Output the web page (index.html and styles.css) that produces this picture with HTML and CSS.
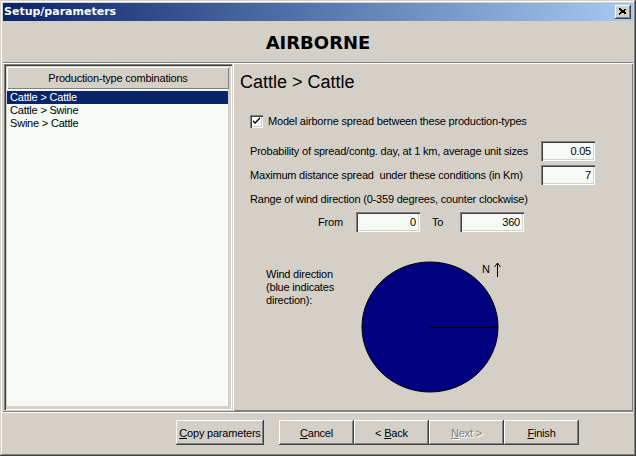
FILE: index.html
```html
<!DOCTYPE html>
<html>
<head>
<meta charset="utf-8">
<link rel="stylesheet" href="styles.css">
</head>
<body>
<div class="window">
  <div class="titlebar">
    <span class="title">Setup/parameters</span>
    <span class="close"><svg width="8" height="7" viewBox="0 0 8 7"><path d="M0.5 0.5 L7.5 6.5 M1.5 0.5 L7.5 5.5 M0.5 1.5 L6.5 6.5 M7.5 0.5 L0.5 6.5 M6.5 0.5 L0.5 5.5" stroke="#000" stroke-width="1" fill="none" shape-rendering="crispEdges"/></svg></span>
  </div>
  <div class="header">AIRBORNE</div>
  <div class="main">
    <div class="left">
      <div class="group">
        <div class="ghead">Production-type combinations</div>
        <ul class="list">
          <li class="sel">Cattle &gt; Cattle</li>
          <li>Cattle &gt; Swine</li>
          <li>Swine &gt; Cattle</li>
        </ul>
      </div>
    </div>
    <div class="right">
      <div class="ptitle">Cattle &gt; Cattle</div>
      <div class="chkrow">
        <span class="chk"><svg width="9" height="9" viewBox="0 0 9 9"><path d="M1 3 L1 5 L3 7 L8 2 L8 0 L3 5 Z" fill="#000"/></svg></span>
        <span>Model airborne spread between these production-types</span>
      </div>
      <div class="row r1">
        <span>Probability of spread/contg. day, at 1 km, average unit sizes</span>
        <span class="field fsmall">0.05</span>
      </div>
      <div class="row r2">
        <span>Maximum distance spread&nbsp; under these conditions (in Km)</span>
        <span class="field fsmall">7</span>
      </div>
      <div class="rangelbl">Range of wind direction (0-359 degrees, counter clockwise)</div>
      <div class="fromrow">
        <span class="from">From</span>
        <span class="field fwide">0</span>
        <span class="to">To</span>
        <span class="field fwide">360</span>
      </div>
      <div class="wind">
        <div class="windlbl">Wind direction<br>(blue indicates<br>direction):</div>
        <div class="dial">
          <svg width="138" height="132" viewBox="0 0 138 132">
            <ellipse cx="69" cy="66" rx="68" ry="65" fill="#000080" stroke="#000" stroke-width="1"/>
            <line x1="69" y1="66.5" x2="137" y2="66.5" stroke="#000" stroke-width="1"/>
            <line x1="131" y1="66" x2="137" y2="66" stroke="#000" stroke-width="1.5"/>
          </svg>
          <div class="north"><span>N</span><svg width="7" height="15" viewBox="0 0 7 15"><path d="M3.5 1 L3.5 15 M3.5 1 L0.5 5 M3.5 1 L6.5 5" stroke="#000" stroke-width="1" fill="none"/></svg></div>
        </div>
      </div>
    </div>
  </div>
  <div class="footer">
    <button class="btn copy"><u>C</u>opy parameters</button>
    <button class="btn cancel"><u>C</u>ancel</button>
    <button class="btn">&lt; <u>B</u>ack</button>
    <button class="btn disabled"><u>N</u>ext &gt;</button>
    <button class="btn"><u>F</u>inish</button>
  </div>
</div>
</body>
</html>
```
FILE: styles.css
```css
* { box-sizing: border-box; }
html, body { margin: 0; padding: 0; }
body {
  background: #d4d0c8;
  font-family: "Liberation Sans", Arial, sans-serif;
  font-size: 11px;
  letter-spacing: -0.2px;
  color: #000;
}
.window {
  width: 636px;
  height: 456px;
  padding: 3px;
  background: #d4d0c8;
  box-shadow: inset -1px -1px 0 #404040, inset 1px 1px 0 #d4d0c8, inset -2px -2px 0 #808080, inset 2px 2px 0 #fff;
  display: flex;
  flex-direction: column;
}
.titlebar {
  height: 18px;
  background: linear-gradient(to right, #0a246a, #a6caf0);
  display: flex;
  align-items: center;
  justify-content: space-between;
  padding: 0 2px 0 1px;
  margin-bottom: 1px;
}
.title {
  font-family: "DejaVu Sans", Tahoma, sans-serif;
  font-weight: bold;
  font-size: 11px;
  letter-spacing: 0;
  color: #fff;
  line-height: 14px;
}
.close {
  width: 16px;
  height: 14px;
  background: #d4d0c8;
  box-shadow: inset -1px -1px 0 #404040, inset 1px 1px 0 #fff, inset -2px -2px 0 #808080;
  display: flex;
  align-items: center;
  justify-content: center;
  padding: 0 1px 1px 0;
}
.close svg { display: block; }
.header {
  height: 41px;
  border-bottom: 1px solid #808080;
  display: flex;
  align-items: center;
  justify-content: center;
  font-family: "DejaVu Sans", Tahoma, sans-serif;
  font-weight: bold;
  font-size: 18px;
  letter-spacing: 0;
  padding-top: 1px;
}
.main {
  height: 348px;
  display: flex;
  box-shadow: inset 0 1px 0 #fff;
}
.left {
  width: 230px;
  padding: 1px 1px 1px 1px;
  display: flex;
}
.group {
  flex: 1;
  display: flex;
  flex-direction: column;
  padding: 3px;
  box-shadow: inset 1px 1px 0 #808080, inset 2px 2px 0 #404040, inset -1px -1px 0 #fff, inset -2px -2px 0 #d4d0c8;
}
.ghead {
  height: 22px;
  flex: none;
  display: flex;
  align-items: center;
  justify-content: center;
  box-shadow: inset 1px 1px 0 #fff, inset -1px -1px 0 #808080;
}
.list {
  flex: 1;
  list-style: none;
  margin: 0;
  padding: 2px 1px 0 0;
  background: #f5faf6;
  box-shadow: inset 0 -1px 0 #d4d0c8, inset -1px 0 0 #d4d0c8;
}
.list li {
  height: 13px;
  line-height: 13px;
  padding-left: 3px;
}
.list li.sel {
  background: #0a246a;
  color: #fff;
}
.right {
  width: 400px;
  padding: 9px 38px 0 17px;
  box-shadow: inset 1px 1px 0 #fff, inset -1px -1px 0 #808080;
}
.ptitle {
  font-size: 18px;
  letter-spacing: 0;
  line-height: 21px;
  height: 21px;
  margin-left: -10px;
}
.chkrow {
  margin-top: 20px;
  height: 16px;
  display: flex;
  align-items: center;
  gap: 5px;
}
.chk {
  width: 13px;
  height: 13px;
  background: #fff;
  padding: 2px;
  box-shadow: inset 1px 1px 0 #808080, inset 2px 2px 0 #404040, inset -1px -1px 0 #fff, inset -2px -2px 0 #d4d0c8;
}
.chk svg { display: block; }
.row {
  height: 20px;
  display: flex;
  align-items: center;
  justify-content: space-between;
}
.r1 { margin-top: 12px; }
.r2 { margin-top: 4px; }
.field {
  height: 20px;
  line-height: 18px;
  text-align: right;
  padding: 1px 4px 0 0;
  background: #f5faf6;
  box-shadow: inset 1px 1px 0 #808080, inset 2px 2px 0 #404040, inset -1px -1px 0 #fff, inset -2px -2px 0 #d4d0c8;
}
.fsmall { width: 54px; }
.fwide { width: 64px; }
.rangelbl {
  margin-top: 6px;
  height: 16px;
  line-height: 16px;
}
.fromrow {
  margin-top: 5px;
  height: 20px;
  display: flex;
  align-items: center;
  padding-left: 68px;
}
.from { width: 38px; }
.to { width: 28px; margin-left: 12px; }
.wind {
  margin-top: 29px;
  display: flex;
  padding-left: 16px;
}
.windlbl {
  width: 95px;
  line-height: 13px;
  margin-top: 7px;
}
.dial {
  position: relative;
  width: 138px;
  height: 132px;
}
.dial > svg { display: block; }
.north {
  position: absolute;
  left: 121px;
  top: 1px;
  display: flex;
  align-items: flex-start;
  gap: 4px;
  line-height: 14px;
}
.north svg { display: block; }
.footer {
  flex: 1;
  border-top: 1px solid #808080;
  box-shadow: inset 0 1px 0 #fff;
  display: flex;
  align-items: flex-start;
  padding: 8px 0 0 173px;
}
.btn {
  height: 25px;
  width: 75px;
  margin: 0;
  padding: 0;
  border: none;
  background: #d4d0c8;
  font-family: "Liberation Sans", Arial, sans-serif;
  font-size: 11px;
  letter-spacing: -0.2px;
  color: #000;
  box-shadow: inset -1px -1px 0 #404040, inset 1px 1px 0 #fff, inset -2px -2px 0 #808080;
}
.btn.copy { width: 88px; margin-right: 15px; }
.btn.disabled { color: #808080; text-shadow: 1px 1px 0 #fff; }
```
